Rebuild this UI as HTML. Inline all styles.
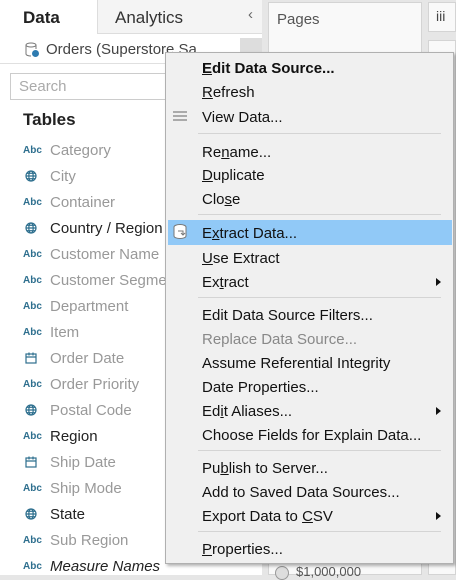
<!DOCTYPE html>
<html><head><meta charset="utf-8"><style>
*{margin:0;padding:0;box-sizing:border-box}
body{width:456px;height:575px;overflow:hidden;background:#e6e6e6;font-family:"Liberation Sans",sans-serif;position:relative}
.abs{position:absolute}
.left{left:0;top:0;width:262px;height:575px;background:#fff}
.tabdata{left:0;top:0;width:97px;height:34px;background:#fff;font-weight:bold;font-size:17px;color:#222;padding:8px 0 0 23px}
.tabana{left:97px;top:0;width:165px;height:34px;background:#f4f4f4;border-left:1px solid #ddd;border-bottom:1px solid #ddd;font-size:17px;color:#333;padding:8px 0 0 17px}
.field{position:absolute;left:0;height:26px;font-size:15px;color:#999;width:262px}
.field .ic{position:absolute;left:23px;top:7px;font-size:10px;font-weight:bold;color:#2e6f8e}
.field svg{position:absolute;left:25px;top:6px}
.field .t{position:absolute;left:50px;top:4px}
.dark{color:#222!important}
.menu{left:165px;top:52px;width:289px;height:512px;background:#f0f0f0;border:1px solid #b0b0b0;box-shadow:2px 2px 3px rgba(0,0,0,.3);font-size:15px;color:#111}
.mi{position:absolute;left:36px;height:24px;line-height:24px;white-space:nowrap}
.sep{position:absolute;left:32px;right:12px;height:1px;background:#d4d4d4}
.gray{color:#888}
u{text-decoration:underline}
.arr{position:absolute;left:270px;width:0;height:0;border-left:5px solid #111;border-top:4px solid transparent;border-bottom:4px solid transparent}
</style></head><body>
<svg width="0" height="0" style="position:absolute"><defs>
<symbol id="g" viewBox="0 0 12 12"><g fill="none" stroke="#2e6f8e" stroke-width="1.2"><circle cx="6" cy="6" r="5"/><ellipse cx="6" cy="6" rx="2.2" ry="5"/><path d="M1 6h10M2 3.3h8M2 8.7h8"/></g></symbol>
<symbol id="c" viewBox="0 0 12 12"><g fill="none" stroke="#2e6f8e" stroke-width="1.2"><rect x="1" y="2" width="10" height="9"/><path d="M1 5h10M4 0.5v3M8 0.5v3"/></g></symbol>
</defs></svg>
<div class="abs left"></div>
<div class="abs tabdata">Data</div>
<div class="abs tabana">Analytics<span style="position:absolute;left:150px;top:6px;font-size:15px;color:#666">‹</span></div>
<div class="abs" style="left:0;top:34px;width:262px;height:30px;border-bottom:1px solid #e0e0e0;font-size:15px;color:#444;padding:7px 0 0 46px">Orders (Superstore Sa</div>
<svg class="abs" style="left:25px;top:42px" width="15" height="16"><ellipse cx="6" cy="3" rx="5" ry="2" fill="none" stroke="#777"/><path d="M1 3v9c0 1 2 2 5 2M11 3v4" fill="none" stroke="#777"/><circle cx="10.5" cy="11.5" r="3.5" fill="#2e7bb0"/></svg>
<div class="abs" style="left:240px;top:38px;width:22px;height:24px;background:#ddd"></div>
<div class="abs" style="left:10px;top:73px;width:160px;height:27px;border:1px solid #ccc;background:#fff;font-size:15px;color:#aaa;padding:4px 0 0 8px">Search</div>
<div class="abs" style="left:23px;top:110px;font-size:17px;font-weight:bold;color:#222">Tables</div>

<div class="field" style="top:138px"><span class="ic">Abc</span><span class="t">Category</span></div>
<div class="field" style="top:164px"><svg width="12" height="12"><use href="#g"/></svg><span class="t">City</span></div>
<div class="field" style="top:190px"><span class="ic">Abc</span><span class="t">Container</span></div>
<div class="field dark" style="top:216px"><svg width="12" height="12"><use href="#g"/></svg><span class="t">Country / Region</span></div>
<div class="field" style="top:242px"><span class="ic">Abc</span><span class="t">Customer Name</span></div>
<div class="field" style="top:268px"><span class="ic">Abc</span><span class="t">Customer Segment</span></div>
<div class="field" style="top:294px"><span class="ic">Abc</span><span class="t">Department</span></div>
<div class="field" style="top:320px"><span class="ic">Abc</span><span class="t">Item</span></div>
<div class="field" style="top:346px"><svg width="12" height="12"><use href="#c"/></svg><span class="t">Order Date</span></div>
<div class="field" style="top:372px"><span class="ic">Abc</span><span class="t">Order Priority</span></div>
<div class="field" style="top:398px"><svg width="12" height="12"><use href="#g"/></svg><span class="t">Postal Code</span></div>
<div class="field dark" style="top:424px"><span class="ic">Abc</span><span class="t">Region</span></div>
<div class="field" style="top:450px"><svg width="12" height="12"><use href="#c"/></svg><span class="t">Ship Date</span></div>
<div class="field" style="top:476px"><span class="ic">Abc</span><span class="t">Ship Mode</span></div>
<div class="field dark" style="top:502px"><svg width="12" height="12"><use href="#g"/></svg><span class="t">State</span></div>
<div class="field" style="top:528px"><span class="ic">Abc</span><span class="t">Sub Region</span></div>
<div class="field dark" style="top:554px"><span class="ic">Abc</span><span class="t" style="font-style:italic">Measure Names</span></div>

<div class="abs" style="left:268px;top:2px;width:154px;height:573px;background:#f9f9f9;border:1px solid #d4d4d4"></div>
<div class="abs" style="left:277px;top:11px;font-size:15px;color:#555">Pages</div>
<div class="abs" style="left:428px;top:2px;width:28px;height:30px;background:#f9f9f9;border:1px solid #d4d4d4;font-size:14px;color:#444;padding:5px 0 0 7px">iii</div>
<div class="abs" style="left:428px;top:40px;width:28px;height:535px;background:#f9f9f9;border:1px solid #d4d4d4"></div>
<div class="abs" style="left:275px;top:566px;width:14px;height:14px;border-radius:50%;border:1px solid #999;background:#ddd"></div>
<div class="abs" style="left:296px;top:564px;font-size:13px;color:#555">$1,000,000</div>

<div class="abs menu">
 <div class="mi" style="top:4px;font-weight:bold"><u>E</u>dit Data Source...</div>
 <div class="mi" style="top:28px"><u>R</u>efresh</div>
 <div class="mi" style="top:53px">View Data...</div>
 <svg style="position:absolute;left:7px;top:58px" width="14" height="10"><g fill="#aaa"><rect x="0" y="0" width="14" height="2"/><rect x="0" y="4" width="14" height="2"/><rect x="0" y="8" width="14" height="2"/></g></svg>
 <div class="sep" style="top:80px"></div>
 <div class="mi" style="top:88px">Re<u>n</u>ame...</div>
 <div class="mi" style="top:111px"><u>D</u>uplicate</div>
 <div class="mi" style="top:135px">Clo<u>s</u>e</div>
 <div class="sep" style="top:161px"></div>
 <div style="position:absolute;left:2px;right:1px;top:167px;height:25px;background:#91c9f7"></div>
 <svg style="position:absolute;left:6px;top:170px" width="18" height="18"><ellipse cx="8" cy="4" rx="6" ry="2.5" fill="#fff" stroke="#777"/><path d="M2 4v9c0 1.5 3 2.5 6 2.5s6-1 6-2.5V4" fill="#fff" stroke="#777"/><path d="M6 8h5v4M9 10l2 2 2-2" fill="none" stroke="#777"/></svg>
 <div class="mi" style="top:169px">E<u>x</u>tract Data...</div>
 <div class="mi" style="top:194px"><u>U</u>se Extract</div>
 <div class="mi" style="top:218px">Ex<u>t</u>ract</div><div class="arr" style="top:225px"></div>
 <div class="sep" style="top:244px"></div>
 <div class="mi" style="top:251px">Edit Data Source Filters...</div>
 <div class="mi gray" style="top:275px">Replace Data Source...</div>
 <div class="mi" style="top:299px">Assume Referential Integrity</div>
 <div class="mi" style="top:323px">Date Properties...</div>
 <div class="mi" style="top:347px">Ed<u>i</u>t Aliases...</div><div class="arr" style="top:354px"></div>
 <div class="mi" style="top:371px">Choose Fields for Explain Data...</div>
 <div class="sep" style="top:397px"></div>
 <div class="mi" style="top:404px">Pu<u>b</u>lish to Server...</div>
 <div class="mi" style="top:428px">Add to Saved Data Sources...</div>
 <div class="mi" style="top:452px">Export Data to <u>C</u>SV</div><div class="arr" style="top:459px"></div>
 <div class="sep" style="top:478px"></div>
 <div class="mi" style="top:485px"><u>P</u>roperties...</div>
</div>
</body></html>
